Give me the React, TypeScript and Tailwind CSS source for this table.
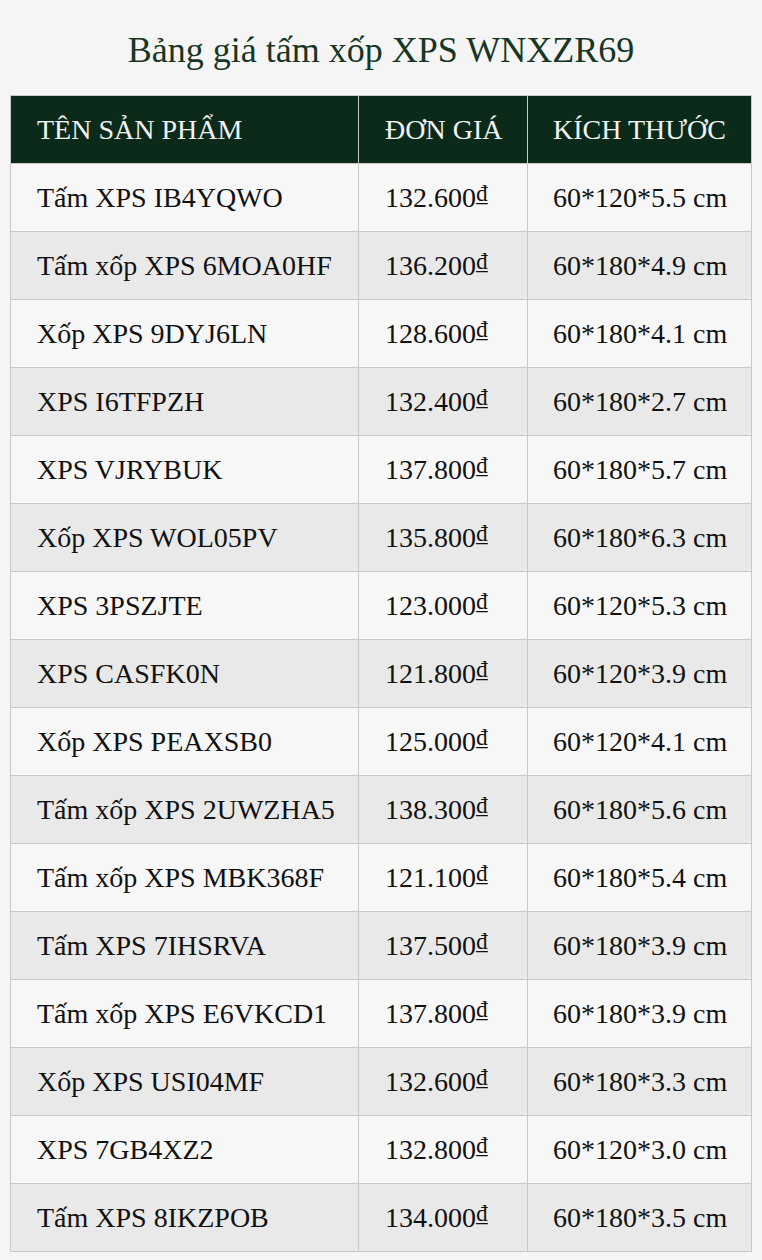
const rows: [string, string, string][] = [
  ["Tấm XPS IB4YQWO", "132.600", "60*120*5.5 cm"],
  ["Tấm xốp XPS 6MOA0HF", "136.200", "60*180*4.9 cm"],
  ["Xốp XPS 9DYJ6LN", "128.600", "60*180*4.1 cm"],
  ["XPS I6TFPZH", "132.400", "60*180*2.7 cm"],
  ["XPS VJRYBUK", "137.800", "60*180*5.7 cm"],
  ["Xốp XPS WOL05PV", "135.800", "60*180*6.3 cm"],
  ["XPS 3PSZJTE", "123.000", "60*120*5.3 cm"],
  ["XPS CASFK0N", "121.800", "60*120*3.9 cm"],
  ["Xốp XPS PEAXSB0", "125.000", "60*120*4.1 cm"],
  ["Tấm xốp XPS 2UWZHA5", "138.300", "60*180*5.6 cm"],
  ["Tấm xốp XPS MBK368F", "121.100", "60*180*5.4 cm"],
  ["Tấm XPS 7IHSRVA", "137.500", "60*180*3.9 cm"],
  ["Tấm xốp XPS E6VKCD1", "137.800", "60*180*3.9 cm"],
  ["Xốp XPS USI04MF", "132.600", "60*180*3.3 cm"],
  ["XPS 7GB4XZ2", "132.800", "60*120*3.0 cm"],
  ["Tấm XPS 8IKZPOB", "134.000", "60*180*3.5 cm"],
];

export default function App() {
  return (
    <div className="min-h-[1260px] bg-[#f5f5f5] px-[10px] pt-[27px] font-['Liberation_Serif',serif]">
      <h1 className="text-center text-[36px] leading-[46px] text-[#173626] mb-[22px]">
        Bảng giá tấm xốp XPS WNXZR69
      </h1>
      <table className="w-[741px] border-collapse table-fixed text-[28px] text-[#111]">
        <colgroup>
          <col className="w-[348px]" />
          <col className="w-[169px]" />
          <col className="w-[224px]" />
        </colgroup>
        <thead>
          <tr className="bg-[#0b2a1a] text-[#f2f2f2] h-[68px]">
            <th className="border border-[#c8c8c8] pl-[26px] text-left font-normal">TÊN SẢN PHẨM</th>
            <th className="border border-[#c8c8c8] pl-[26px] text-left font-normal">ĐƠN GIÁ</th>
            <th className="border border-[#c8c8c8] pl-[25px] text-left font-normal">KÍCH THƯỚC</th>
          </tr>
        </thead>
        <tbody>
          {rows.map((r, i) => (
            <tr key={i} className={`h-[68px] ${i % 2 === 0 ? "bg-[#f7f7f7]" : "bg-[#e9e9e9]"}`}>
              <td className="border border-[#c8c8c8] pl-[26px]">{r[0]}</td>
              <td className="border border-[#c8c8c8] pl-[26px]">
                {r[1]}
                <span className="text-[23px] align-[6px]">₫</span>
              </td>
              <td className="border border-[#c8c8c8] pl-[25px]">{r[2]}</td>
            </tr>
          ))}
        </tbody>
      </table>
    </div>
  );
}
